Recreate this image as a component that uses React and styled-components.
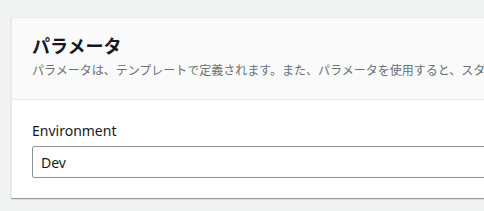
import React from "react";
import styled, { createGlobalStyle } from "styled-components";

const GlobalStyle = createGlobalStyle`
  html, body {
    margin: 0;
    padding: 0;
    background: #f2f3f3;
    overflow: hidden;
  }
  body {
    font-family: "Noto Sans", "Noto Sans CJK JP", sans-serif;
    color: #16191f;
  }
`;

const Page = styled.div`
  padding: 17px 0 0 11px;
  height: 211px;
  box-sizing: border-box;
`;

const Card = styled.div`
  width: 640px;
  background: #ffffff;
  border-top: 1px solid #eaeded;
  border-left: 1px solid #eaeded;
  box-shadow: 0 1px 1px 0 rgba(0, 28, 36, 0.3), 1px 1px 1px 0 rgba(0, 28, 36, 0.15);
`;

const Header = styled.div`
  background: #fafafa;
  border-bottom: 1px solid #eaeded;
  padding: 17px 20px 20px 20px;
`;

const Title = styled.h2`
  margin: 0;
  font-size: 18px;
  line-height: 22px;
  font-weight: 700;
  color: #16191f;
`;

const Description = styled.p`
  margin: 6px 0 0 0;
  font-size: 12px;
  line-height: 16px;
  color: #687078;
  white-space: nowrap;
`;

const Body = styled.div`
  padding: 21px 20px 20px 20px;
`;

const Label = styled.label`
  display: block;
  font-size: 14px;
  line-height: 20px;
  color: #16191f;
  margin-bottom: 5px;
`;

const Input = styled.input`
  display: block;
  width: 100%;
  box-sizing: border-box;
  height: 32px;
  padding: 0 8px;
  border: 1px solid #879596;
  border-radius: 2px;
  font-family: "Noto Sans", sans-serif;
  font-size: 14px;
  color: #16191f;
  background: #ffffff;
  outline: none;
`;

export default function App() {
  return (
    <Page>
      <GlobalStyle />
      <Card>
        <Header>
          <Title>パラメータ</Title>
          <Description>
            パラメータは、テンプレートで定義されます。また、パラメータを使用すると、スタックを作成または更新する際にカスタム値を入力できます。
          </Description>
        </Header>
        <Body>
          <Label htmlFor="env">Environment</Label>
          <Input id="env" defaultValue="Dev" readOnly />
        </Body>
      </Card>
    </Page>
  );
}
